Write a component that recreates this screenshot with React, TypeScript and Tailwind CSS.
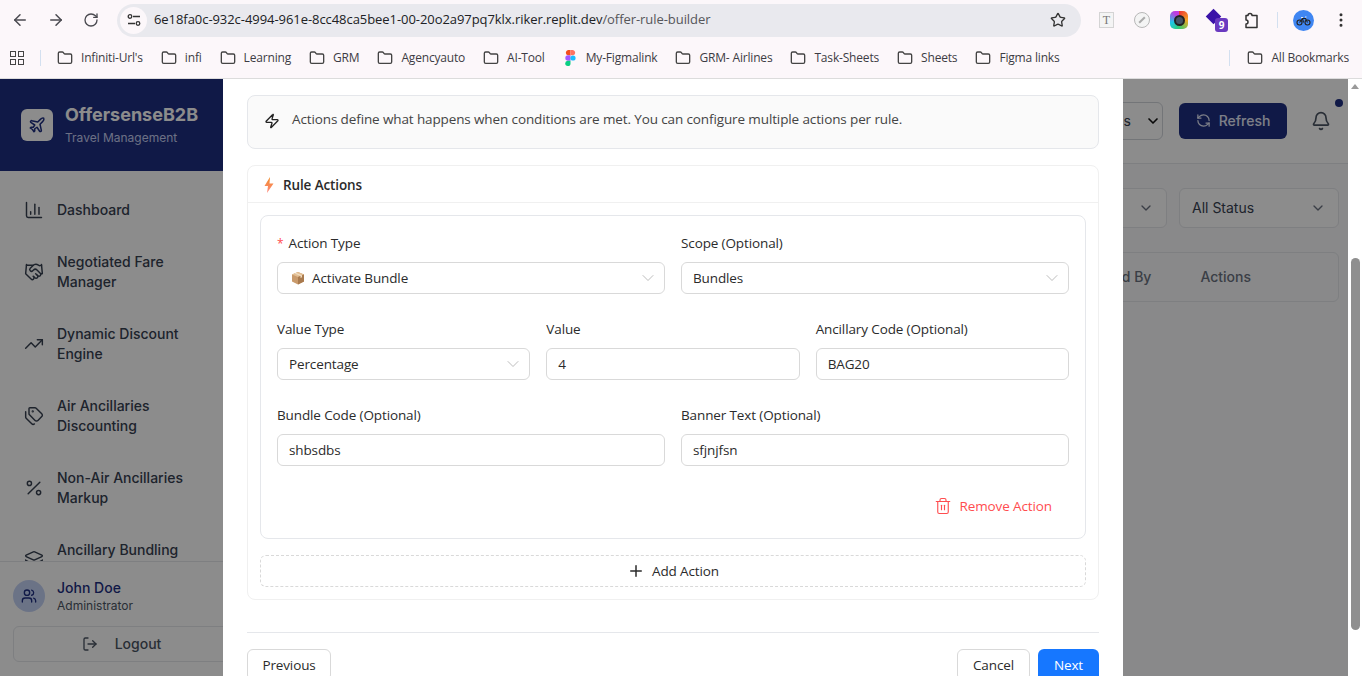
import React from "react";
import {
  ArrowLeft,
  ArrowRight,
  Bell,
  ChartColumn,
  ChevronDown,
  Folder,
  Handshake,
  Layers,
  LogOut,
  MoreVertical,
  Percent,
  Plane,
  Plus,
  RefreshCcw,
  RotateCw,
  Star,
  Tags,
  Trash2,
  TrendingUp,
  Users,
  Zap,
} from "lucide-react";

const bookmarks = ["Infiniti-Url's", "infi", "Learning", "GRM", "Agencyauto", "AI-Tool", "My-Figmalink", "GRM- Airlines", "Task-Sheets", "Sheets", "Figma links"];

const navItems = [
  { icon: ChartColumn, lines: ["Dashboard"] },
  { icon: Handshake, lines: ["Negotiated Fare", "Manager"] },
  { icon: TrendingUp, lines: ["Dynamic Discount", "Engine"] },
  { icon: Tags, lines: ["Air Ancillaries", "Discounting"] },
  { icon: Percent, lines: ["Non-Air Ancillaries", "Markup"] },
  { icon: Layers, lines: ["Ancillary Bundling", "Engine"] },
];

function FigmaLogo() {
  return (
    <svg width="11" height="16" viewBox="0 0 11 16" className="mx-[2px]">
      <path d="M5.5 0H3a2.7 2.7 0 0 0 0 5.3h2.5z" fill="#f24e1e" />
      <path d="M5.5 0H8a2.7 2.7 0 0 1 0 5.3H5.5z" fill="#ff7262" />
      <path d="M5.5 5.3H3a2.7 2.7 0 0 0 0 5.4h2.5z" fill="#a259ff" />
      <circle cx="8" cy="8" r="2.6" fill="#1abcfe" />
      <path d="M5.5 10.7H3A2.65 2.65 0 1 0 5.5 13.4z" fill="#0acf83" />
    </svg>
  );
}

function TuneIcon() {
  return (
    <svg width="14" height="14" viewBox="0 0 14 14" fill="none" stroke="#333" strokeWidth="1.3">
      <circle cx="3" cy="3.5" r="1.8" />
      <path d="M6 3.5h7M1 10.5h7" />
      <circle cx="11" cy="10.5" r="1.8" />
    </svg>
  );
}

function ExtensionIcon() {
  return (
    <svg width="16" height="17" viewBox="0 0 16 17" fill="none" stroke="#333" strokeWidth="1.5" strokeLinejoin="round">
      <path d="M5 3.5a2 2 0 0 1 4 0h5v12H3v-3.5a2 2 0 0 0 0-4V3.5z" />
    </svg>
  );
}

function BikeAvatar() {
  return (
    <svg width="21" height="21" viewBox="0 0 21 21">
      <circle cx="10.5" cy="10.5" r="10.5" fill="#3f86f2" />
      <g fill="none" stroke="#222" strokeWidth="1.1">
        <circle cx="6.5" cy="12.5" r="2.5" />
        <circle cx="14.5" cy="12.5" r="2.5" />
        <path d="M6.5 12.5l3-4h3l2 4M9.5 8.5l1 4" />
      </g>
      <path d="M8 7.5h2M12 7h1.5" stroke="#e8e8e8" strokeWidth="1.2" />
    </svg>
  );
}

function BrowserChrome() {
  return (
    <div className="h-[79px] shrink-0 border-b border-[#dcdcdc] bg-[#fcf7fa] font-['Open_Sans',sans-serif] text-[#3c3c44]">
      <div className="flex h-10 items-center">
        <div className="flex w-[117px] items-center gap-[18px] pl-[11px] text-[#4a4a50]">
          <ArrowLeft size={18} />
          <ArrowRight size={18} />
          <RotateCw size={16} />
        </div>
        <div className="flex h-[33px] w-[964px] items-center rounded-full bg-[#e9e9ee] pl-[3px] pr-[15px]">
          <div className="flex h-[27px] w-[27px] items-center justify-center rounded-full bg-[#fcf7fa]">
            <TuneIcon />
          </div>
          <div className="ml-[7px] flex-1 text-[13px] tracking-[-0.06px] whitespace-nowrap text-[#202124]">
            6e18fa0c-932c-4994-961e-8cc48ca5bee1-00-20o2a97pq7klx.riker.replit.dev<span className="text-[#55565a]">/offer-rule-builder</span>
          </div>
          <Star size={16} className="text-[#333]" />
        </div>
        <div className="ml-[18px] flex items-center">
          <div className="flex h-4 w-[15px] items-center justify-center border border-[#d4d4d4] bg-[#f4f4f4] font-['Liberation_Serif',serif] text-xs text-[#777]">T</div>
          <div className="ml-[20px] flex h-4 w-4 items-center justify-center rounded-full border border-[#b8b8b8] bg-[#f4f4f4]">
            <div className="h-[2px] w-2 -rotate-45 bg-[#aaa]" />
          </div>
          <div className="ml-[20px] flex h-[18px] w-[18px] items-center justify-center rounded-[5px] bg-[conic-gradient(#e33_0deg,#f5a623_90deg,#2ecc71_180deg,#1ec8e6_250deg,#c03be0_330deg)]">
            <div className="h-[11px] w-[11px] rounded-full border-2 border-[#222] bg-[#456]" />
          </div>
          <div className="relative ml-[18px] h-[22px] w-[22px]">
            <div className="absolute left-[2px] top-[2px] h-[11px] w-[11px] rotate-45 bg-[#3a12a8]" />
            <div className="absolute left-[9px] top-[9px] flex h-[14px] w-[13px] items-center justify-center rounded-[3px] bg-[#6a3ac0] text-[10px] font-bold text-white">9</div>
          </div>
          <div className="ml-[15px]">
            <ExtensionIcon />
          </div>
          <div className="ml-[18px] h-4 w-px bg-[#d3e0f0]" />
          <div className="ml-[15px]">
            <BikeAvatar />
          </div>
          <MoreVertical size={18} className="ml-[18px] text-[#333]" />
        </div>
      </div>
      <div className="flex h-[38px] items-center pb-[2px] text-xs tracking-[-0.18px]">
        <div className="ml-[10px] grid h-[14px] w-[14px] grid-cols-2 gap-[2px]">
          <div className="border border-[#444]" />
          <div className="border border-[#444]" />
          <div className="border border-[#444]" />
          <div className="border border-[#444]" />
        </div>
        <div className="ml-[16px] h-4 w-px bg-[#d3e0f0]" />
        <div className="flex items-center gap-[18px] pl-[16px]">
          {bookmarks.map((b) => (
            <div key={b} className="flex items-center gap-[8px] whitespace-nowrap">
              {b === "My-Figmalink" ? <FigmaLogo /> : <Folder size={16} className="text-[#444]" />}
              <span>{b}</span>
            </div>
          ))}
        </div>
        <div className="ml-auto mr-[13px] flex items-center">
          <div className="mr-[17px] h-4 w-px bg-[#d3e0f0]" />
          <Folder size={16} className="mr-[8px] text-[#444]" />
          <span>All Bookmarks</span>
        </div>
      </div>
    </div>
  );
}

function Sidebar() {
  return (
    <aside className="relative flex w-[256px] shrink-0 flex-col overflow-hidden border-r border-[#e5e7eb] bg-white font-['Inter',sans-serif]">
      <div className="flex h-[92px] shrink-0 items-center gap-[12px] bg-[#1e2f82] px-[21px]">
        <div className="flex h-8 w-8 items-center justify-center rounded-md bg-white text-[#1e2f82]">
          <Plane size={18} />
        </div>
        <div>
          <div className="text-lg leading-[22px] font-bold text-white">OffersenseB2B</div>
          <div className="mt-[4px] text-xs leading-4 text-[#c5cdf0]">Travel Management</div>
        </div>
      </div>
      <nav className="flex flex-col gap-[32px] pl-[24px] pt-[29px] text-sm leading-5 font-medium text-[#374151]">
        {navItems.map((item) => (
          <div key={item.lines[0]} className="flex items-center gap-[13px]">
            <item.icon size={20} strokeWidth={1.75} />
            <div>
              {item.lines.map((l) => (
                <div key={l}>{l}</div>
              ))}
            </div>
          </div>
        ))}
      </nav>
      <div className="absolute inset-x-0 bottom-0 h-[115px] border-t border-[#e5e7eb] bg-white px-[13px] pt-[18px]">
        <div className="flex items-start gap-[12px]">
          <div className="flex h-8 w-8 items-center justify-center rounded-full bg-[#c4d2f5] text-[#1e2f82]">
            <Users size={16} />
          </div>
          <div className="-mt-[2px]">
            <div className="text-sm leading-5 font-medium text-[#1e2f82]">John Doe</div>
            <div className="text-xs leading-4 text-[#4b5563]">Administrator</div>
          </div>
        </div>
        <div className="mt-[12px] flex h-9 items-center justify-center gap-[17px] rounded-md border border-[#e5e7eb] pr-[12px] text-sm font-medium text-[#4b5563]">
          <LogOut size={16} />
          Logout
        </div>
      </div>
    </aside>
  );
}

function MainBehind() {
  return (
    <main className="flex min-w-0 flex-1 flex-col font-['Inter',sans-serif]">
      <div className="relative flex h-[85px] shrink-0 items-center justify-end border-b border-[#e5e7eb] bg-white pb-[1px] pr-[17px]">
        <div className="flex h-[38px] w-[100px] items-center justify-end gap-[14px] rounded-md border border-[#d1d5db] pr-[1px] text-sm text-[#374151]">
          s <ChevronDown size={16} strokeWidth={2.5} className="text-[#111]" />
        </div>
        <div className="ml-[16px] flex h-9 w-[108px] items-center justify-center gap-[8px] rounded-md bg-[#1e2f82] text-sm font-medium text-[#e4e8f8]">
          <RefreshCcw size={15} />
          Refresh
        </div>
        <div className="relative ml-[24px] text-[#4b5563]">
          <Bell size={20} />
          <div className="absolute -right-[12px] -top-[12px] h-2 w-2 rounded-full bg-[#1e2f82]" />
        </div>
      </div>
      <div className="flex-1 bg-[#f9fafb] pl-[9px] pr-[9px] pt-[24px]">
        <div className="flex justify-end gap-[12px]">
          <div className="flex h-10 w-[160px] items-center justify-end rounded-md border border-[#e5e7eb] bg-white pr-[12px] text-[#6b7280]">
            <ChevronDown size={16} />
          </div>
          <div className="flex h-10 w-[160px] items-center justify-between rounded-md border border-[#e5e7eb] bg-white px-[12px] text-sm text-[#374151]">
            All Status
            <ChevronDown size={16} className="text-[#6b7280]" />
          </div>
        </div>
        <div className="mt-[24px] flex h-[50px] items-center justify-end rounded-md border border-[#e5e7eb] bg-[#f9fafb] pr-[87px] text-sm font-medium text-[#6b7280]">
          <span className="mr-[49px]">d By</span>
          <span>Actions</span>
        </div>
      </div>
    </main>
  );
}

function Field({ label, required, children }: { label: string; required?: boolean; children: React.ReactNode }) {
  return (
    <div className="mb-[24px] min-w-0">
      <div className="mb-[8px] h-[22px] leading-[22px] text-[#2b2b2b]">
        {required ? <span className="mr-[5px] text-xs text-[#ff4d4f]">*</span> : null}
        {label}
      </div>
      {children}
    </div>
  );
}

function InputBox({ value, select, prefix }: { value: string; select?: boolean; prefix?: React.ReactNode }) {
  return (
    <div className="flex h-8 items-center rounded-md border border-[#d9d9d9] bg-white px-[11px] text-[#2b2b2b]">
      {prefix}
      <span className="flex-1">{value}</span>
      {select ? <ChevronDown size={20} strokeWidth={1} className="-mr-[5px] text-[#b0b0b0]" /> : null}
    </div>
  );
}

function BoxEmoji() {
  return (
    <svg width="14" height="14" viewBox="0 0 14 14" className="ml-[2px] mr-[7px]">
      <path d="M7 1l6 2.5v7L7 13.5 1 10.5v-7z" fill="#c99a6b" />
      <path d="M7 6L1 3.5 7 1l6 2.5z" fill="#e3bf94" />
      <path d="M7 6v7.5l6-3v-7z" fill="#a97a4e" />
      <path d="M3.5 2.5l6 2.5v2l1.5-.7v-2l-6-2.5z" fill="#f0dcc0" />
    </svg>
  );
}

function BoltIcon() {
  return (
    <svg width="10" height="16" viewBox="0 0 10 16">
      <defs>
        <linearGradient id="bolt" x1="0" y1="0" x2="0" y2="1">
          <stop offset="0" stopColor="#f08a24" />
          <stop offset="1" stopColor="#ff8a80" />
        </linearGradient>
      </defs>
      <path d="M6 0L0.5 9H4L3 16L9.5 6.5H5.5z" fill="url(#bolt)" />
    </svg>
  );
}

function Modal() {
  return (
    <div className="absolute left-[223px] top-0 h-[720px] w-[900px] bg-white px-[24px] pt-[16px] font-['Open_Sans',sans-serif] text-[13.5px] tracking-[-0.12px]">
      <div className="flex h-[54px] items-center gap-[12px] rounded-lg border border-[#e5e7eb] bg-[#fafafa] px-[16px] pb-[5px] text-[#444]">
        <Zap size={16} className="mt-[2px] text-[#222]" />
        <span>Actions define what happens when conditions are met. You can configure multiple actions per rule.</span>
      </div>
      <div className="mt-[16px] rounded-lg border border-[#f0f0f0]">
        <div className="flex h-[37px] items-center gap-[9px] border-b border-[#f0f0f0] px-[16px] pt-[2px] font-semibold text-[#2b2b2b]">
          <BoltIcon />
          Rule Actions
        </div>
        <div className="p-[12px]">
          <div className="rounded-lg border border-[#e5e7eb] p-[16px]">
            <div className="grid grid-cols-2 gap-x-[16px]">
              <Field label="Action Type" required>
                <InputBox value="Activate Bundle" select prefix={<BoxEmoji />} />
              </Field>
              <Field label="Scope (Optional)">
                <InputBox value="Bundles" select />
              </Field>
            </div>
            <div className="grid grid-cols-3 gap-x-[16px]">
              <Field label="Value Type">
                <InputBox value="Percentage" select />
              </Field>
              <Field label="Value">
                <InputBox value="4" />
              </Field>
              <Field label="Ancillary Code (Optional)">
                <InputBox value="BAG20" />
              </Field>
            </div>
            <div className="grid grid-cols-2 gap-x-[16px]">
              <Field label="Bundle Code (Optional)">
                <InputBox value="shbsdbs" />
              </Field>
              <Field label="Banner Text (Optional)">
                <InputBox value="sfjnjfsn" />
              </Field>
            </div>
            <div className="flex h-8 items-center justify-end gap-[8px] pr-[17px] text-[#ff4d4f]">
              <Trash2 size={18} strokeWidth={1.5} />
              Remove Action
            </div>
          </div>
          <div className="mt-[16px] flex h-8 items-center justify-center gap-[7px] rounded-md border border-dashed border-[#d9d9d9] text-[#2b2b2b]">
            <Plus size={18} />
            Add Action
          </div>
        </div>
      </div>
      <div className="mt-[32px] flex justify-between border-t border-[#e5e7eb] pt-[16px]">
        <div className="flex h-8 w-[84px] items-center justify-center rounded-md border border-[#d9d9d9] text-[#2b2b2b]">Previous</div>
        <div className="flex gap-[8px]">
          <div className="flex h-8 w-[73px] items-center justify-center rounded-md border border-[#d9d9d9] text-[#2b2b2b]">Cancel</div>
          <div className="flex h-8 w-[61px] items-center justify-center rounded-md bg-[#1677ff] text-white">Next</div>
        </div>
      </div>
    </div>
  );
}

export default function App() {
  return (
    <div className="flex h-[676px] w-[1362px] flex-col overflow-hidden bg-white">
      <BrowserChrome />
      <div className="flex min-h-0 flex-1">
        <div className="relative flex min-w-0 flex-1 overflow-hidden">
          <Sidebar />
          <MainBehind />
          <div className="absolute inset-0 bg-black/45" />
          <Modal />
        </div>
        <div className="flex w-[14px] shrink-0 flex-col items-center bg-white">
          <div className="mt-[5px] h-0 w-0 border-x-[4px] border-b-[5px] border-x-transparent border-b-[#9a9a9a]" />
          <div className="mt-[169px] h-[372px] w-[9px] rounded-full bg-[#8f8f8f]" />
        </div>
      </div>
    </div>
  );
}
